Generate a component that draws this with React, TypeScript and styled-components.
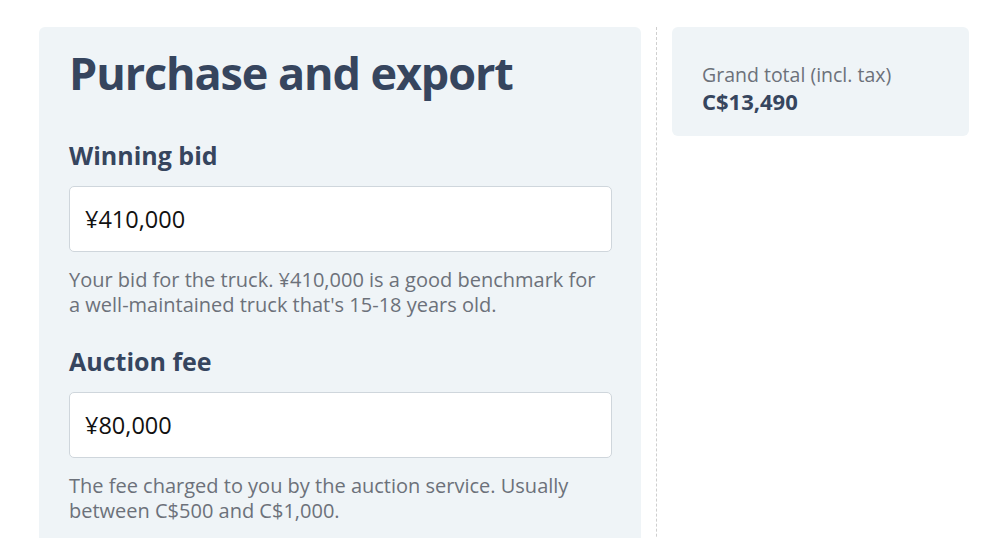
import React from 'react';
import styled, { createGlobalStyle } from 'styled-components';

const GlobalStyle = createGlobalStyle`
    html, body {
        margin: 0;
        padding: 0;
        background: #ffffff;
        font-family: 'Open Sans', 'Noto Sans', sans-serif;
    }
    * {
        box-sizing: border-box;
    }
`;

const Page = styled.div`
    display: grid;
    grid-template-columns: 602px 1px 297px;
    column-gap: 15px;
    padding: 27px 31px 0 39px;
    height: 538px;
    overflow: hidden;
`;

const FormPanel = styled.section`
    background-color: #eff4f7;
    border-radius: 6px;
    padding: 18px 29px 40px 30px;
    min-height: 600px;
`;

const Title = styled.h1`
    margin: 0 0 38px 0;
    font-size: 45px;
    line-height: 56px;
    font-weight: 700;
    letter-spacing: -1.1px;
    color: #36455e;
`;

const Field = styled.div`
    display: flex;
    flex-direction: column;
    margin-bottom: 28px;
`;

const Label = styled.label`
    font-size: 25px;
    line-height: 32px;
    font-weight: 700;
    color: #36455e;
    margin-bottom: 15px;
`;

const Input = styled.input`
    width: 100%;
    height: 66px;
    padding: 0 15px;
    border: 1px solid #cfd6dc;
    border-radius: 5px;
    background: #ffffff;
    font-family: 'Open Sans', 'Noto Sans', sans-serif;
    font-size: 23.5px;
    color: #111111;
    outline: none;
`;

const Help = styled.p`
    margin: 15px 0 0 0;
    max-width: 530px;
    font-size: 20px;
    line-height: 25px;
    color: #6c717a;
`;

const Divider = styled.div`
    border-left: 1px dashed #cfcfcf;
    height: 100%;
`;

const TotalCard = styled.aside`
    align-self: start;
    background-color: #eff4f7;
    border-radius: 6px;
    padding: 34px 30px 20px 30px;
    height: 109px;
`;

const TotalLabel = styled.div`
    font-size: 19.5px;
    line-height: 27px;
    color: #6c717a;
`;

const TotalValue = styled.div`
    font-size: 22px;
    line-height: 26px;
    font-weight: 700;
    color: #36455e;
`;

const fields = [
    {
        label: 'Winning bid',
        value: '¥410,000',
        help: "Your bid for the truck. ¥410,000 is a good benchmark for a well-maintained truck that's 15-18 years old.",
    },
    {
        label: 'Auction fee',
        value: '¥80,000',
        help: 'The fee charged to you by the auction service. Usually between C$500 and C$1,000.',
    },
];

const App: React.FC = () => {
    return (
        <>
            <GlobalStyle />
            <Page>
                <FormPanel>
                    <Title>Purchase and export</Title>
                    {fields.map((f) => (
                        <Field key={f.label}>
                            <Label>{f.label}</Label>
                            <Input type="text" defaultValue={f.value} />
                            <Help>{f.help}</Help>
                        </Field>
                    ))}
                </FormPanel>
                <Divider />
                <TotalCard>
                    <TotalLabel>Grand total (incl. tax)</TotalLabel>
                    <TotalValue>C$13,490</TotalValue>
                </TotalCard>
            </Page>
        </>
    );
};

export default App;
